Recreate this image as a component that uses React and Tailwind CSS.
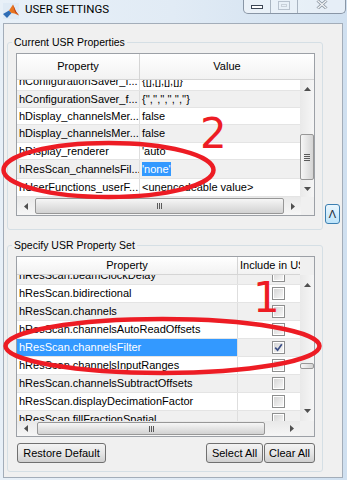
import React from "react";

const usrRows = [
  { prop: "hConfigurationSaver_f...", val: "{[],[],[],[]}", h: "h-[18px] mt-[-7px]", alt: false },
  { prop: "hConfigurationSaver_f...", val: "{'','','','','',''}", h: "h-[17px]", alt: true },
  { prop: "hDisplay_channelsMer...", val: "false", h: "h-[17px]", alt: false },
  { prop: "hDisplay_channelsMer...", val: "false", h: "h-[18px]", alt: true },
  { prop: "hDisplay_renderer", val: "'auto'", h: "h-[17px]", alt: false },
  { prop: "hResScan_channelsFil...", val: "'none'", h: "h-[19px]", alt: true, editing: true },
  { prop: "hUserFunctions_userF...", val: "<unencodeable value>", h: "h-[18px]", alt: false },
];

const setRows = [
  { prop: "hResScan.beamClockDelay", alt: true, first: true },
  { prop: "hResScan.bidirectional", alt: false },
  { prop: "hResScan.channels", alt: true },
  { prop: "hResScan.channelsAutoReadOffsets", alt: false },
  { prop: "hResScan.channelsFilter", alt: true, sel: true, on: true },
  { prop: "hResScan.channelsInputRanges", alt: false },
  { prop: "hResScan.channelsSubtractOffsets", alt: true },
  { prop: "hResScan.displayDecimationFactor", alt: false },
  { prop: "hResScan.fillFractionSpatial", alt: true },
];

const ArrowUp = () => (
  <svg width="7" height="4" viewBox="0 0 7 4"><path d="M3.5 0L7 4H0Z" fill="#4f4f4f" /></svg>
);
const ArrowDown = () => (
  <svg width="7" height="4" viewBox="0 0 7 4"><path d="M0 0H7L3.5 4Z" fill="#4f4f4f" /></svg>
);
const ArrowLeft = () => (
  <svg width="4" height="7" viewBox="0 0 4 7"><path d="M4 0V7L0 3.5Z" fill="#4f4f4f" /></svg>
);
const ArrowRight = () => (
  <svg width="4" height="7" viewBox="0 0 4 7"><path d="M0 0L4 3.5L0 7Z" fill="#4f4f4f" /></svg>
);

const VScroll = ({ arrowH, thumbTop, thumbH, grip }) => (
  <div className="w-[14px] h-full shrink-0 flex flex-col bg-gradient-to-r from-[#e9e9e9] to-[#f6f6f6]">
    <div className="flex items-center justify-center shrink-0" style={{ height: arrowH }}>
      <ArrowUp />
    </div>
    <div
      className="mx-[0px] shrink-0 border border-[#979797] rounded-[2px] bg-gradient-to-r from-[#f6f6f6] to-[#d4d4d4] flex flex-col items-center justify-center gap-[1px]"
      style={{ marginTop: thumbTop, height: thumbH }}
    >
      {grip && (
        <>
          <div className="w-[6px] h-[1px] bg-[#5a5a5a]" />
          <div className="w-[6px] h-[1px] bg-[#5a5a5a]" />
          <div className="w-[6px] h-[1px] bg-[#5a5a5a]" />
          <div className="w-[6px] h-[1px] bg-[#5a5a5a]" />
        </>
      )}
    </div>
    <div className="flex-1" />
    <div className="flex items-center justify-center shrink-0" style={{ height: arrowH }}>
      <ArrowDown />
    </div>
  </div>
);

const HScroll = ({ thumbLeft, thumbW }) => (
  <div className="flex-1 h-full flex bg-gradient-to-b from-[#e9e9e9] to-[#f6f6f6]">
    <div className="w-[17px] shrink-0 flex items-center justify-center">
      <ArrowLeft />
    </div>
    <div
      className="shrink-0 my-[1px] border border-[#979797] rounded-[2px] bg-gradient-to-b from-[#f6f6f6] to-[#d2d2d2] flex items-center justify-center gap-[1px]"
      style={{ marginLeft: thumbLeft, width: thumbW }}
    >
      <div className="w-[1px] h-[6px] bg-[#5a5a5a]" />
      <div className="w-[1px] h-[6px] bg-[#5a5a5a]" />
      <div className="w-[1px] h-[6px] bg-[#5a5a5a]" />
    </div>
    <div className="flex-1" />
    <div className="w-[17px] shrink-0 flex items-center justify-center">
      <ArrowRight />
    </div>
  </div>
);

const Checkbox = ({ on }) => (
  <div className="w-[13px] h-[13px] border border-[#8e8f8f] bg-white p-[1px]">
    <div className="w-full h-full bg-gradient-to-br from-[#d6d6d6] to-[#f6f6f6] flex items-center justify-center">
      {on && (
        <svg width="9" height="9" viewBox="0 0 9 9">
          <path d="M1.2 4.6L3.6 7.2L7.8 1.2" fill="none" stroke="#3c4f86" strokeWidth="1.7" />
        </svg>
      )}
    </div>
  </div>
);

const UsrTable = () => (
  <div className="w-[299px] border border-[#9ca0a6] bg-white flex flex-col">
    <div className="h-[26px] flex border-b border-[#d5d5d5] bg-gradient-to-b from-white to-[#f2f2f2] text-[11px]">
      <div className="w-[123px] border-r border-[#d5d5d5] flex items-center justify-center">Property</div>
      <div className="flex-1 flex items-center justify-center">Value</div>
    </div>
    <div className="h-[117px] flex">
      <div className="flex-1 overflow-hidden flex flex-col text-[11px]">
        {usrRows.map((r, i) => (
          <div
            key={i}
            className={`${r.h} shrink-0 flex border-b border-[#e4e4e4] ${r.alt ? "bg-[#f0f0f0]" : "bg-white"}`}
          >
            <div className="w-[123px] shrink-0 border-r border-[#dedede] pl-[2px] flex items-center whitespace-nowrap overflow-hidden">
              {r.prop}
            </div>
            <div className="flex-1 pl-[2px] flex items-center whitespace-nowrap overflow-hidden">
              {r.editing ? (
                <span className="bg-[#3399ff] text-white leading-[14px]">{r.val}</span>
              ) : (
                r.val
              )}
            </div>
          </div>
        ))}
      </div>
      <VScroll arrowH={17} thumbTop={37} thumbH={46} grip />
    </div>
    <div className="h-[18px] flex">
      <HScroll thumbLeft={1} thumbW={249} />
      <div className="w-[14px] bg-[#f0f0f0]" />
    </div>
  </div>
);

const SetTable = () => (
  <div className="w-[299px] border border-[#9ca0a6] bg-white flex flex-col">
    <div className="h-[18px] flex">
      <div className="flex-1 overflow-hidden flex border-b border-[#d5d5d5] bg-gradient-to-b from-white to-[#f2f2f2] text-[11px]">
        <div className="w-[221px] shrink-0 border-r border-[#d5d5d5] flex items-center justify-center">Property</div>
        <div className="w-[80px] shrink-0 pl-[2px] flex items-center whitespace-nowrap">Include in USR Set</div>
      </div>
      <div className="w-[14px] bg-[#f0f0f0]" />
    </div>
    <div className="h-[146px] flex">
      <div className="flex-1 overflow-hidden flex flex-col text-[11px]">
        {setRows.map((r, i) => (
          <div
            key={i}
            className={`h-[18px] shrink-0 flex border-b border-[#e4e4e4] ${r.first ? "mt-[-8px]" : ""} ${r.alt ? "bg-[#f0f0f0]" : "bg-white"}`}
          >
            <div
              className={`w-[221px] shrink-0 border-r border-[#dedede] pl-[2px] flex items-center whitespace-nowrap ${r.sel ? "bg-[#3399ff] text-white" : ""}`}
            >
              {r.prop}
            </div>
            <div className="w-[80px] shrink-0 flex items-center justify-center">
              <Checkbox on={r.on} />
            </div>
          </div>
        ))}
      </div>
      <VScroll arrowH={20} thumbTop={68} thumbH={6} />
    </div>
    <div className="h-[15px] flex">
      <HScroll thumbLeft={3} thumbW={228} />
      <div className="w-[14px] bg-[#f0f0f0]" />
    </div>
  </div>
);

const WinButton = ({ className, children }) => (
  <button
    className={`h-[20px] border border-[#707070] rounded-[3px] bg-gradient-to-b from-[#f3f3f3] via-[#e6e6e6] to-[#d0d0d0] text-[11px] text-black flex items-center justify-center ${className}`}
  >
    {children}
  </button>
);

const TitleBar = () => (
  <div className="h-[23px] flex items-start">
    <svg className="mt-[3px] ml-[3px]" width="16" height="16" viewBox="0 0 16 16">
      <rect x="0" y="0" width="16" height="16" fill="#dfeaf5" />
      <path d="M0 11L6 7.5L8.5 10L4 15Z" fill="#2f6db5" />
      <path d="M6 7.5L10 1.5L13 8.5L16 12.5L11.5 10.5L8.5 10Z" fill="#e8741f" />
      <path d="M10 1.5L13 8.5L16 12.5L12 9Z" fill="#b63a1c" />
    </svg>
    <span className="ml-[6px] mt-[2px] font-['Roboto',sans-serif] text-[11.5px] leading-[14px] text-black">
      USER SETTINGS
    </span>
    <div className="ml-auto mr-[1px] flex h-[14px] border-x border-b border-[#8996a6] rounded-b-[5px] bg-white/45 overflow-hidden">
      <div className="w-[27px] border-r border-[#a9b4c1] flex justify-center pt-[5px]">
        <div className="w-[12px] h-[4px] border border-[#3d4756] bg-white" />
      </div>
      <div className="w-[27px] border-r border-[#a9b4c1] flex justify-center pt-[1px]">
        <div className="w-[12px] h-[9px] border border-[#b8c2ce] p-[2px]">
          <div className="w-full h-full border border-[#c9d1da]" />
        </div>
      </div>
      <div className="w-[47px] flex justify-center pt-[0px]">
        <svg width="12" height="9" viewBox="0 0 12 9">
          <path d="M1.5 0.5L10.5 8.5M10.5 0.5L1.5 8.5" stroke="#8c96a2" strokeWidth="3" />
          <path d="M1.5 0.5L10.5 8.5M10.5 0.5L1.5 8.5" stroke="#f4f6f8" strokeWidth="1.2" />
        </svg>
      </div>
    </div>
  </div>
);

export default function App() {
  return (
    <div className="relative w-[347px] h-[480px] overflow-hidden bg-gradient-to-r from-[#e8f0f8] via-[#e1ebf5] to-[#d0e0f0] font-['Liberation_Sans',Arial,sans-serif] text-black">
      <TitleBar />
      <div className="ml-[3px] w-[340px] h-[455px] border border-[#a3adb9] bg-[#f0f0f0] flex">
        <div className="ml-[3px] w-[316px] flex flex-col">
          <fieldset className="mt-[11px] border border-[#d5dfe5] rounded-[3px] pb-[13px]">
            <legend className="ml-[4px] px-[2px] text-[10.5px] leading-[14px]">Current USR Properties</legend>
            <div className="ml-[8px] mt-[4px]">
              <UsrTable />
            </div>
          </fieldset>
          <fieldset className="mt-[8px] border border-[#d5dfe5] rounded-[3px] pb-[8px]">
            <legend className="ml-[4px] px-[2px] text-[10.5px] leading-[14px]">Specify USR Property Set</legend>
            <div className="ml-[8px] mt-[4px]">
              <SetTable />
            </div>
            <div className="ml-[9px] mr-[7px] mt-[6px] flex">
              <WinButton className="w-[89px]">Restore Default</WinButton>
              <WinButton className="ml-auto w-[57px]">Select All</WinButton>
              <WinButton className="ml-[1px] w-[51px]">Clear All</WinButton>
            </div>
          </fieldset>
        </div>
        <div className="ml-[2px] w-[16px]">
          <button className="mt-[180px] w-[15px] h-[20px] border border-[#3c7fb1] rounded-[3px] bg-gradient-to-b from-[#eaf6fd] to-[#bde4fa] text-[11px] leading-[18px] text-[#1e2a3a] flex items-center justify-center">
            Λ
          </button>
        </div>
      </div>

      <svg className="absolute top-0 left-0 pointer-events-none" width="347" height="480" viewBox="0 0 347 480">
        <ellipse cx="108.5" cy="170" rx="105" ry="27" fill="none" stroke="#ed1c24" strokeWidth="4.5" />
        <ellipse cx="162.5" cy="346" rx="157" ry="27" fill="none" stroke="#ed1c24" strokeWidth="4.5" />
      </svg>
      <span className="absolute left-[200px] top-[113px] font-['DejaVu_Sans',sans-serif] text-[42px] leading-[42px] text-[#ed1c24] pointer-events-none">
        2
      </span>
      <span className="absolute left-[253px] top-[277px] font-['DejaVu_Sans',sans-serif] text-[42px] leading-[42px] text-[#ed1c24] pointer-events-none">
        1
      </span>
    </div>
  );
}
